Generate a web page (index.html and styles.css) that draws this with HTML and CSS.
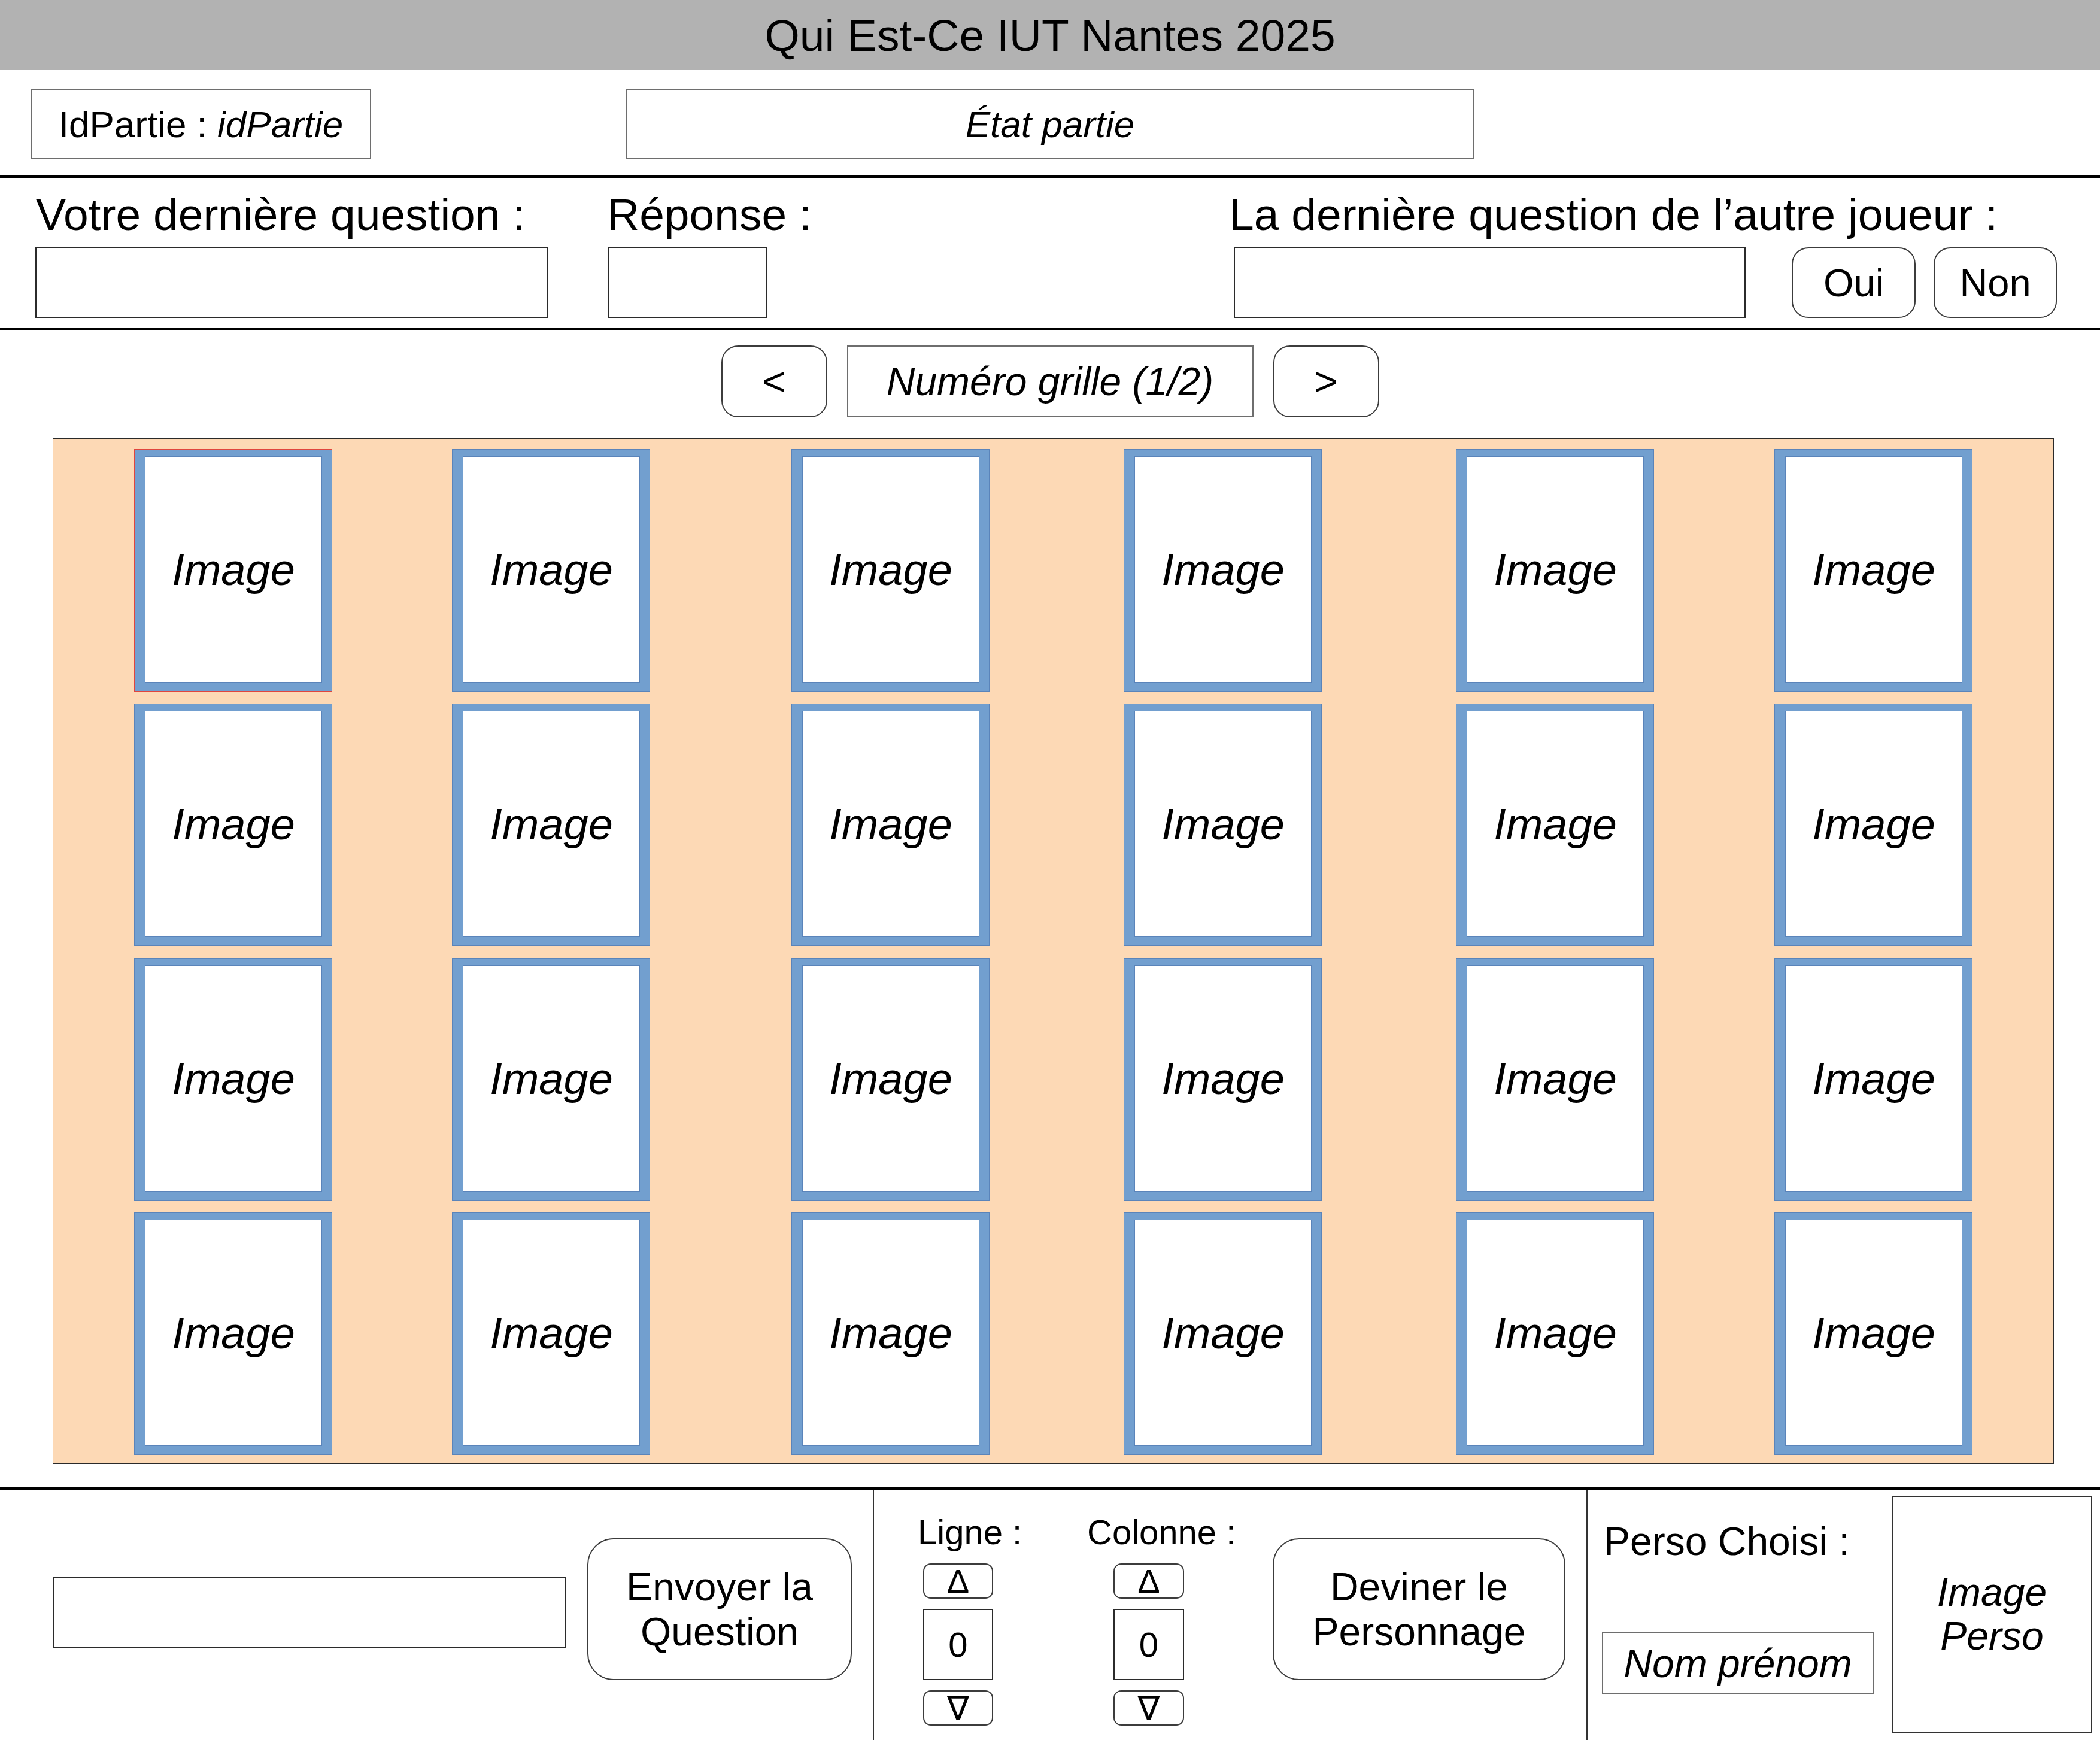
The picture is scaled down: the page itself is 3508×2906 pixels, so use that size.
FILE: index.html
```html
<!DOCTYPE html>
<html lang="fr">
<head>
<meta charset="utf-8">
<title>Qui Est-Ce IUT Nantes 2025</title>
<link rel="stylesheet" href="styles.css">
</head>
<body>
<div class="page">
  <header class="titlebar">Qui Est-Ce IUT Nantes 2025</header>

  <section class="status">
    <div class="box idpartie">IdPartie :&nbsp;<em>idPartie</em></div>
    <div class="box etat"><em>État partie</em></div>
  </section>

  <section class="questions">
    <div class="q q-mine">
      <div class="label">Votre dernière question :</div>
      <div class="input w-mine"></div>
    </div>
    <div class="q q-rep">
      <div class="label">Réponse :</div>
      <div class="input w-rep"></div>
    </div>
    <div class="q q-other">
      <div class="label">La dernière question de l’autre joueur :</div>
      <div class="other-row">
        <div class="input w-other"></div>
        <button class="btn yn oui">Oui</button>
        <button class="btn yn non">Non</button>
      </div>
    </div>
  </section>

  <section class="board">
    <div class="nav">
      <button class="btn navbtn">&lt;</button>
      <div class="box numero"><em>Numéro grille (1/2)</em></div>
      <button class="btn navbtn">&gt;</button>
    </div>
    <div class="panel">
      <div class="grid">
        <div class="card selected"><div class="photo">Image</div></div>
        <div class="card"><div class="photo">Image</div></div>
        <div class="card"><div class="photo">Image</div></div>
        <div class="card"><div class="photo">Image</div></div>
        <div class="card"><div class="photo">Image</div></div>
        <div class="card"><div class="photo">Image</div></div>
        <div class="card"><div class="photo">Image</div></div>
        <div class="card"><div class="photo">Image</div></div>
        <div class="card"><div class="photo">Image</div></div>
        <div class="card"><div class="photo">Image</div></div>
        <div class="card"><div class="photo">Image</div></div>
        <div class="card"><div class="photo">Image</div></div>
        <div class="card"><div class="photo">Image</div></div>
        <div class="card"><div class="photo">Image</div></div>
        <div class="card"><div class="photo">Image</div></div>
        <div class="card"><div class="photo">Image</div></div>
        <div class="card"><div class="photo">Image</div></div>
        <div class="card"><div class="photo">Image</div></div>
        <div class="card"><div class="photo">Image</div></div>
        <div class="card"><div class="photo">Image</div></div>
        <div class="card"><div class="photo">Image</div></div>
        <div class="card"><div class="photo">Image</div></div>
        <div class="card"><div class="photo">Image</div></div>
        <div class="card"><div class="photo">Image</div></div>
      </div>
    </div>
  </section>

  <section class="actions">
    <div class="act act-ask">
      <div class="input w-ask"></div>
      <button class="btn bigbtn envoyer">Envoyer la<br>Question</button>
    </div>
    <div class="act act-guess">
      <div class="spin-group g-ligne">
        <div class="spin-label">Ligne :</div>
        <div class="spinner">
          <button class="btn step">Δ</button>
          <div class="value">0</div>
          <button class="btn step">∇</button>
        </div>
      </div>
      <div class="spin-group g-colonne">
        <div class="spin-label">Colonne :</div>
        <div class="spinner">
          <button class="btn step">Δ</button>
          <div class="value">0</div>
          <button class="btn step">∇</button>
        </div>
      </div>
      <button class="btn bigbtn deviner">Deviner le<br>Personnage</button>
    </div>
    <div class="act act-perso">
      <div class="perso-info">
        <div class="perso-label">Perso Choisi :</div>
        <div class="box nom"><em>Nom prénom</em></div>
      </div>
      <div class="perso-image"><em>Image<br>Perso</em></div>
    </div>
  </section>
</div>
</body>
</html>
```

FILE: styles.css
```css
* {
  box-sizing: border-box;
}

html, body {
  margin: 0;
  padding: 0;
  background: #ffffff;
}

body {
  font-family: "Liberation Sans", Arial, "DejaVu Sans", sans-serif;
  color: #000000;
}

em {
  font-style: italic;
}

.page {
  width: 3508px;
  height: 2906px;
  overflow: hidden;
  display: flex;
  flex-direction: column;
}

/* ---------- title bar ---------- */
.titlebar {
  flex: none;
  height: 117px;
  background: #b2b2b2;
  display: flex;
  align-items: center;
  justify-content: center;
  font-size: 75px;
}

/* ---------- generic pieces ---------- */
.box {
  border: 2px solid #6e6e6e;
  background: #ffffff;
  display: flex;
  align-items: center;
  justify-content: center;
  white-space: nowrap;
}

.input {
  border: 2px solid #2b2b2b;
  background: #ffffff;
}

.btn {
  font-family: inherit;
  color: #000000;
  background: #ffffff;
  border: 2px solid #3c3c3c;
  padding: 0;
  margin: 0;
  display: flex;
  align-items: center;
  justify-content: center;
  text-align: center;
}

/* ---------- status row ---------- */
.status {
  flex: none;
  height: 180px;
  border-bottom: 4px solid #000000;
  display: flex;
  align-items: flex-start;
  padding-top: 31px;
}

.idpartie {
  margin-left: 51px;
  width: 569px;
  height: 118px;
  font-size: 62px;
}

.etat {
  margin-left: 425px;
  width: 1418px;
  height: 118px;
  font-size: 62px;
}

/* ---------- questions row ---------- */
.questions {
  flex: none;
  height: 254px;
  border-bottom: 4px solid #000000;
  display: flex;
  align-items: flex-start;
  padding-top: 18px;
}

.q {
  display: flex;
  flex-direction: column;
  align-items: flex-start;
}

.label {
  font-size: 75px;
  line-height: 86px;
  white-space: nowrap;
}

.q-mine {
  margin-left: 59px;
  width: 955px;
}

.q-mine .label {
  margin-left: 1px;
}

.q-rep {
  width: 1039px;
}

.w-mine {
  margin-top: 12px;
  width: 856px;
  height: 118px;
}

.w-rep {
  margin-top: 12px;
  margin-left: 1px;
  width: 267px;
  height: 118px;
}

.other-row {
  margin-top: 12px;
  display: flex;
  align-items: flex-start;
}

.w-other {
  margin-left: 8px;
  width: 855px;
  height: 118px;
}

.yn {
  height: 118px;
  border-radius: 28px;
  font-size: 65px;
}

.oui {
  margin-left: 77px;
  width: 207px;
}

.non {
  margin-left: 30px;
  width: 206px;
}

/* ---------- board ---------- */
.board {
  flex: none;
  height: 1937px;
  border-bottom: 4px solid #000000;
  padding-top: 26px;
  display: flex;
  flex-direction: column;
}

.nav {
  height: 120px;
  display: flex;
  justify-content: center;
  gap: 33px;
}

.navbtn {
  width: 177px;
  height: 120px;
  border-radius: 28px;
  font-size: 66px;
}

.numero {
  width: 679px;
  height: 120px;
  font-size: 66px;
}

.panel {
  margin-top: 35px;
  margin-left: 88px;
  width: 3343px;
  height: 1713px;
  background: #fdd9b5;
  border: 1px solid #2a2a2a;
  padding: 17px 0 0 135px;
}

.grid {
  display: grid;
  grid-template-columns: 531px 567px 555px 555px 532px 331px;
  grid-auto-rows: 405px;
  row-gap: 20px;
}

.card {
  width: 331px;
  height: 405px;
  background: #729fcf;
  border: 1px solid #5a84ba;
  padding: 11px 16px 14px 17px;
}

.card.selected {
  border-color: #e0453e;
}

.photo {
  width: 100%;
  height: 100%;
  background: #ffffff;
  border: 1px solid #5a84ba;
  display: flex;
  align-items: center;
  justify-content: center;
  font-size: 74px;
  font-style: italic;
}

/* ---------- actions ---------- */
.actions {
  flex: 1;
  display: flex;
  align-items: stretch;
}

.act {
  display: flex;
  align-items: flex-start;
}

.act-ask {
  width: 1460px;
  border-right: 2px solid #333333;
  padding: 81px 0 0 88px;
}

.w-ask {
  margin-top: 65px;
  width: 857px;
  height: 118px;
}

.bigbtn {
  height: 237px;
  border-radius: 44px;
  font-size: 66px;
  line-height: 75px;
}

.envoyer {
  margin-left: 36px;
  width: 442px;
}

.act-guess {
  width: 1192px;
  border-right: 2px solid #333333;
  padding: 38px 0 0 73px;
}

.spin-group {
  display: flex;
  flex-direction: column;
  align-items: flex-start;
}

.g-ligne {
  width: 283px;
}

.g-colonne {
  width: 310px;
}

.spin-label {
  font-size: 58px;
  line-height: 65px;
  white-space: nowrap;
}

.spinner {
  margin-top: 20px;
  width: 117px;
  display: flex;
  flex-direction: column;
  gap: 17px;
}

.g-ligne .spinner {
  margin-left: 9px;
}

.g-colonne .spinner {
  margin-left: 44px;
  width: 118px;
}

.step {
  width: 100%;
  height: 59px;
  border-radius: 13px;
  font-size: 56px;
  line-height: 1;
  font-family: "Liberation Sans", "DejaVu Sans", sans-serif;
}

.value {
  height: 119px;
  border: 2px solid #2b2b2b;
  display: flex;
  align-items: center;
  justify-content: center;
  font-size: 58px;
}

.deviner {
  margin-top: 43px;
  width: 489px;
}

.act-perso {
  flex: 1;
  padding-left: 24px;
}

.perso-info {
  margin-top: 49px;
  display: flex;
  flex-direction: column;
  align-items: flex-start;
}

.perso-label {
  margin-left: 3px;
  font-size: 66px;
  line-height: 75px;
  white-space: nowrap;
}

.nom {
  margin-top: 114px;
  width: 454px;
  height: 104px;
  font-size: 66px;
}

.perso-image {
  margin-top: 10px;
  margin-left: 30px;
  width: 335px;
  height: 396px;
  border: 2px solid #333333;
  display: flex;
  align-items: center;
  justify-content: center;
  text-align: center;
  font-size: 66px;
  line-height: 73px;
}
```
